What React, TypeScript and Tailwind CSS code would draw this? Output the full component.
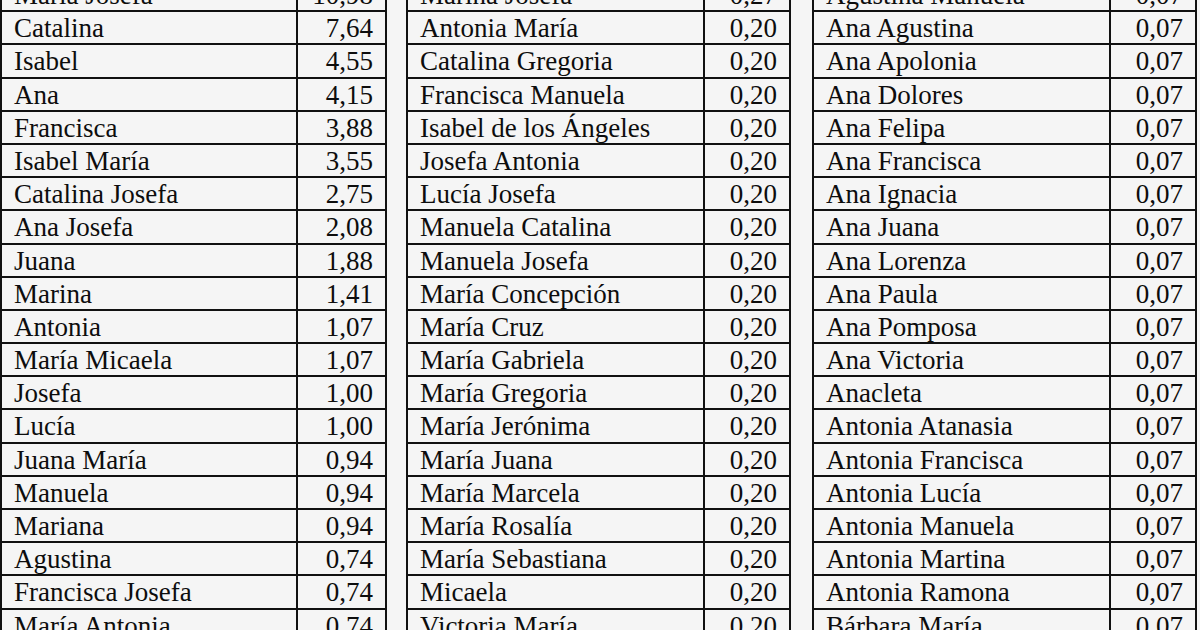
/**
 * Name frequency tables - three bordered columns of names and percentages
 */

type Row = [string, string];

const col1: Row[] = [
  ['María Josefa', '10,98'],
  ['Catalina', '7,64'],
  ['Isabel', '4,55'],
  ['Ana', '4,15'],
  ['Francisca', '3,88'],
  ['Isabel María', '3,55'],
  ['Catalina Josefa', '2,75'],
  ['Ana Josefa', '2,08'],
  ['Juana', '1,88'],
  ['Marina', '1,41'],
  ['Antonia', '1,07'],
  ['María Micaela', '1,07'],
  ['Josefa', '1,00'],
  ['Lucía', '1,00'],
  ['Juana María', '0,94'],
  ['Manuela', '0,94'],
  ['Mariana', '0,94'],
  ['Agustina', '0,74'],
  ['Francisca Josefa', '0,74'],
  ['María Antonia', '0,74'],
];

const col2: Row[] = [
  ['Marina Josefa', '0,27'],
  ['Antonia María', '0,20'],
  ['Catalina Gregoria', '0,20'],
  ['Francisca Manuela', '0,20'],
  ['Isabel de los Ángeles', '0,20'],
  ['Josefa Antonia', '0,20'],
  ['Lucía Josefa', '0,20'],
  ['Manuela Catalina', '0,20'],
  ['Manuela Josefa', '0,20'],
  ['María Concepción', '0,20'],
  ['María Cruz', '0,20'],
  ['María Gabriela', '0,20'],
  ['María Gregoria', '0,20'],
  ['María Jerónima', '0,20'],
  ['María Juana', '0,20'],
  ['María Marcela', '0,20'],
  ['María Rosalía', '0,20'],
  ['María Sebastiana', '0,20'],
  ['Micaela', '0,20'],
  ['Victoria María', '0,20'],
];

const col3: Row[] = [
  'Agustina Manuela',
  'Ana Agustina',
  'Ana Apolonia',
  'Ana Dolores',
  'Ana Felipa',
  'Ana Francisca',
  'Ana Ignacia',
  'Ana Juana',
  'Ana Lorenza',
  'Ana Paula',
  'Ana Pomposa',
  'Ana Victoria',
  'Anacleta',
  'Antonia Atanasia',
  'Antonia Francisca',
  'Antonia Lucía',
  'Antonia Manuela',
  'Antonia Martina',
  'Antonia Ramona',
  'Bárbara María',
].map((n) => [n, '0,07'] as Row);

interface TableProps {
  rows: Row[];
  width: string;
  nameWidth: string;
}

function NameTable({ rows, width, nameWidth }: TableProps) {
  return (
    <div className={`${width} shrink-0 border-x-2 border-[#111]`}>
      {rows.map(([name, value]) => (
        <div key={name} className="flex h-[33.2px] border-b-2 border-[#111] pt-[1px] leading-[30px]">
          <div className={`${nameWidth} shrink-0 border-r-2 border-[#111] -mt-[1px] pt-[1px] pl-[12px] whitespace-nowrap`}>
            {name}
          </div>
          <div className="flex-1 pr-[12px] text-right">{value}</div>
        </div>
      ))}
    </div>
  );
}

export default function App() {
  return (
    <div
      className="w-[1200px] h-[630px] overflow-hidden bg-[#f5f5f5] text-[#0d0d0d] text-[27px]"
      style={{ fontFamily: '"Liberation Serif", "Times New Roman", serif' }}
    >
      <div className="flex items-start -mt-[21px]">
        <NameTable rows={col1} width="w-[387px]" nameWidth="w-[296px]" />
        <div className="w-[19px] shrink-0" />
        <NameTable rows={col2} width="w-[385px]" nameWidth="w-[297px]" />
        <div className="w-[21px] shrink-0" />
        <NameTable rows={col3} width="w-[385px]" nameWidth="w-[297px]" />
      </div>
    </div>
  );
}
